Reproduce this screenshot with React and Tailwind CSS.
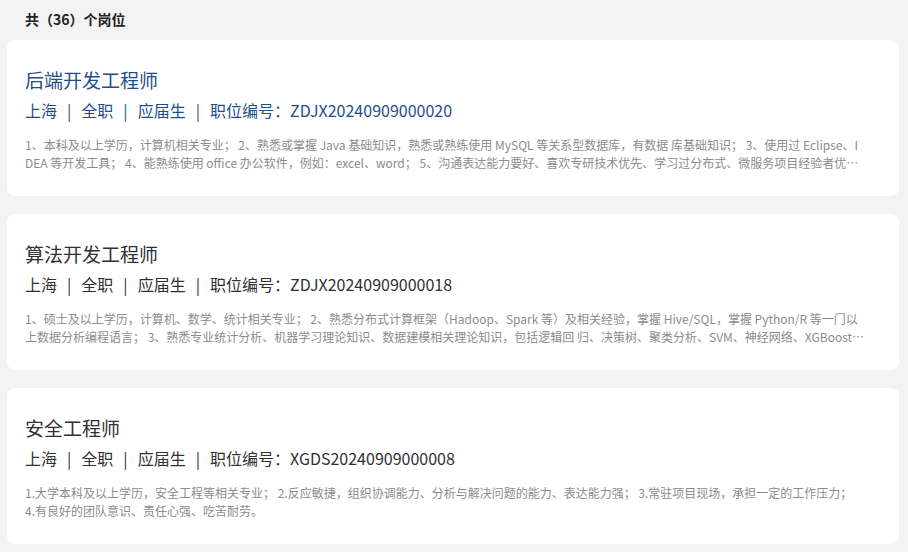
const jobs = [
  {
    title: "后端开发工程师",
    code: "ZDJX20240909000020",
    active: true,
    desc: "1、本科及以上学历，计算机相关专业； 2、熟悉或掌握 Java 基础知识，熟悉或熟练使用 MySQL 等关系型数据库，有数据 库基础知识； 3、使用过 Eclipse、IDEA 等开发工具； 4、能熟练使用 office 办公软件，例如：excel、word； 5、沟通表达能力要好、喜欢专研技术优先、学习过分布式、微服务项目经验者优先；6、有良好的团队合作精神。",
  },
  {
    title: "算法开发工程师",
    code: "ZDJX20240909000018",
    desc: "1、硕士及以上学历，计算机、数学、统计相关专业； 2、熟悉分布式计算框架（Hadoop、Spark 等）及相关经验，掌握 Hive/SQL，掌握 Python/R 等一门以上数据分析编程语言； 3、熟悉专业统计分析、机器学习理论知识、数据建模相关理论知识，包括逻辑回 归、决策树、聚类分析、SVM、神经网络、XGBoost 等算法原理。",
  },
  {
    title: "安全工程师",
    code: "XGDS20240909000008",
    desc: "1.大学本科及以上学历，安全工程等相关专业； 2.反应敏捷，组织协调能力、分析与解决问题的能力、表达能力强； 3.常驻项目现场，承担一定的工作压力； 4.有良好的团队意识、责任心强、吃苦耐劳。",
  },
];

function Sep() {
  return <span className="px-[10px]">|</span>;
}

function JobCard({ job }) {
  const color = job.active ? "text-[#1f4e8c]" : "text-[#303133]";
  return (
    <div className="bg-white rounded-lg pt-[26px] pb-6 pl-[18px] pr-[34px]">
      <h3 className={`text-[19px] leading-[28px] ${color}`}>{job.title}</h3>
      <div className={`mt-1 text-[16px] leading-6 ${color}`}>
        上海<Sep />全职<Sep />应届生<Sep />职位编号：{job.code}
      </div>
      <p className="mt-[14px] text-[12px] leading-[18px] text-[#8c8c8c] break-all line-clamp-2">
        {job.desc}
      </p>
    </div>
  );
}

export default function App() {
  return (
    <div
      className="min-h-screen bg-[#f3f3f3] pl-[7px] pr-[9px] pt-[9px] pb-4"
      style={{ fontFamily: '"Microsoft YaHei", "Noto Sans CJK SC", "Noto Sans", sans-serif' }}
    >
      <div className="pl-[18px] text-[14px] leading-5 font-bold text-[#222] mb-[11px]">
        共（36）个岗位
      </div>
      <div className="flex flex-col gap-[18px]">
        {jobs.map((job) => (
          <JobCard key={job.code} job={job} />
        ))}
      </div>
    </div>
  );
}
